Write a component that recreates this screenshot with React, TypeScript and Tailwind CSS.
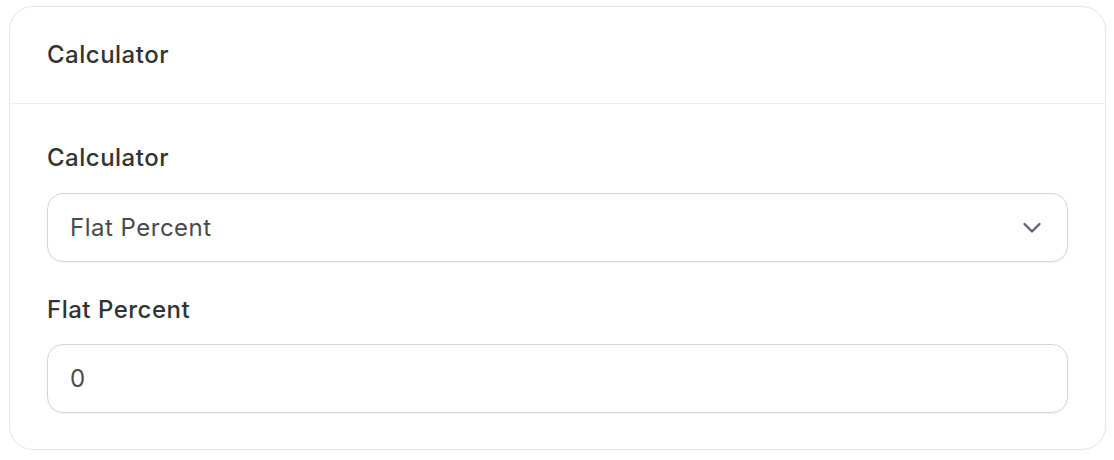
import React from "react";

function Chevron() {
  return (
    <svg width="20" height="12" viewBox="0 0 20 12" fill="none" stroke="#5f6470" strokeWidth="2.4" strokeLinecap="round" strokeLinejoin="round">
      <path d="M2.5 2L10 9.5L17.5 2" />
    </svg>
  );
}

export default function App() {
  return (
    <div className="bg-white w-[1114px] h-[460px] pl-[9px] pt-[6px] pr-[8px]" style={{ fontFamily: "Inter, 'Noto Sans', sans-serif" }}>
      <div className="border border-[#e6e6e6] rounded-[24px] h-[444px] flex flex-col">
        <div className="h-[97px] border-b border-[#efefef] flex items-center px-[37px]">
          <span className="text-[24px] tracking-[0.5px] font-medium text-[#333333]">Calculator</span>
        </div>
        <div className="px-[37px] pt-[39px] flex flex-col">
          <label className="text-[24px] tracking-[0.5px] leading-[30px] font-medium text-[#333333]">Calculator</label>
          <div className="mt-[20px] h-[69px] rounded-[16px] border border-[#d6d6d6] shadow-[0_1px_2px_rgba(0,0,0,0.06)] flex items-center justify-between pl-[22px] pr-[25px]">
            <span className="text-[24px] tracking-[0.5px] text-[#4a4a4a]">Flat Percent</span>
            <Chevron />
          </div>
          <label className="mt-[33px] text-[24px] tracking-[0.5px] leading-[30px] font-medium text-[#333333]">Flat Percent</label>
          <div className="mt-[19px] h-[69px] rounded-[16px] border border-[#d6d6d6] shadow-[0_1px_2px_rgba(0,0,0,0.06)] flex items-center pl-[22px]">
            <span className="text-[24px] text-[#4a4a4a]">0</span>
          </div>
        </div>
      </div>
    </div>
  );
}
